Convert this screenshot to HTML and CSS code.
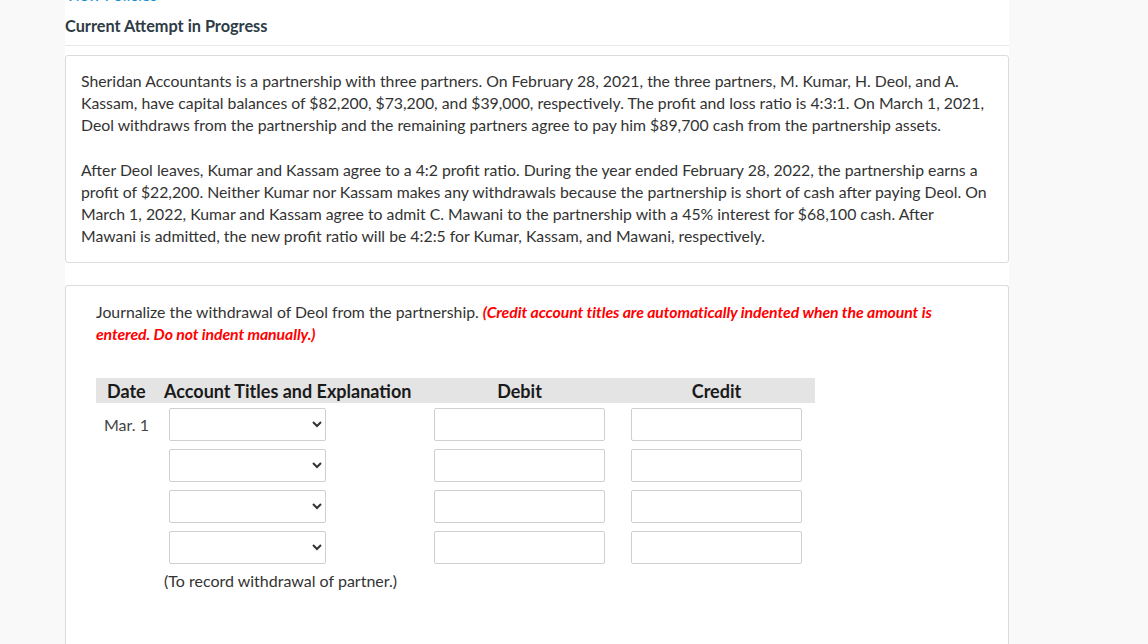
FILE: index.html
```html
<!DOCTYPE html>
<html>
<head>
<meta charset="utf-8">
<link rel="stylesheet" href="styles.css">
</head>
<body>
<div class="page">
  <div class="gutter"></div>
  <main class="main">
    <div class="policies-wrap"><a class="policies" href="#">View Policies</a></div>
    <h2 class="attempt">Current Attempt in Progress</h2>
    <section class="card problem">
      <p>Sheridan Accountants is a partnership with three partners. On February 28, 2021, the three partners, M. Kumar, H. Deol, and A. Kassam, have capital balances of $82,200, $73,200, and $39,000, respectively. The profit and loss ratio is 4:3:1. On March 1, 2021, Deol withdraws from the partnership and the remaining partners agree to pay him $89,700 cash from the partnership assets.</p>
      <p>After Deol leaves, Kumar and Kassam agree to a 4:2 profit ratio. During the year ended February 28, 2022, the partnership earns a profit of $22,200. Neither Kumar nor Kassam makes any withdrawals because the partnership is short of cash after paying Deol. On March 1, 2022, Kumar and Kassam agree to admit C. Mawani to the partnership with a 45% interest for $68,100 cash. After Mawani is admitted, the new profit ratio will be 4:2:5 for Kumar, Kassam, and Mawani, respectively.</p>
    </section>
    <section class="card question">
      <p class="prompt">Journalize the withdrawal of Deol from the partnership. <em class="note">(Credit account titles are automatically indented when the amount is entered. Do not indent manually.)</em></p>
      <div class="journal">
        <div class="jhead">
          <div class="h-date">Date</div>
          <div class="h-acct">Account Titles and Explanation</div>
          <div class="h-num">Debit</div>
          <div class="h-gap"></div>
          <div class="h-num">Credit</div>
        </div>
        <div class="jrow">
          <div class="c-date">Mar. 1</div>
          <div class="c-acct"><select class="sel"><option></option></select></div>
          <div class="c-num"><input class="inp" type="text"></div>
          <div class="c-gap"></div>
          <div class="c-num"><input class="inp" type="text"></div>
        </div>
        <div class="jrow">
          <div class="c-date"></div>
          <div class="c-acct"><select class="sel"><option></option></select></div>
          <div class="c-num"><input class="inp" type="text"></div>
          <div class="c-gap"></div>
          <div class="c-num"><input class="inp" type="text"></div>
        </div>
        <div class="jrow">
          <div class="c-date"></div>
          <div class="c-acct"><select class="sel"><option></option></select></div>
          <div class="c-num"><input class="inp" type="text"></div>
          <div class="c-gap"></div>
          <div class="c-num"><input class="inp" type="text"></div>
        </div>
        <div class="jrow">
          <div class="c-date"></div>
          <div class="c-acct"><select class="sel"><option></option></select></div>
          <div class="c-num"><input class="inp" type="text"></div>
          <div class="c-gap"></div>
          <div class="c-num"><input class="inp" type="text"></div>
        </div>
        <div class="explain">(To record withdrawal of partner.)</div>
      </div>
    </section>
  </main>
  <div class="side"></div>
</div>
</body>
</html>
```

FILE: styles.css
```css
html, body {
  margin: 0;
  padding: 0;
  background: #f9f9f9;
  height: 100%;
  overflow: hidden;
}
body {
  font-family: Lato, "Liberation Sans", sans-serif;
  color: #333;
}
.page {
  display: flex;
  height: 644px;
}
.gutter {
  width: 65px;
  flex: none;
  background: #f9f9f9;
}
.main {
  width: 944px;
  flex: none;
  background: #fff;
  display: flex;
  flex-direction: column;
}
.main > * {
  flex-shrink: 0;
}
.side {
  flex: 1;
  background: #f9f9f9;
}
.policies-wrap {
  height: 16px;
  overflow: hidden;
}
.policies {
  display: block;
  font-size: 16px;
  line-height: 18px;
  margin-top: -14px;
  color: #1a8fd8;
  text-decoration: none;
}
.attempt {
  margin: 0;
  font-size: 16.3px;
  font-weight: 700;
  color: #2d3b45;
  line-height: 20px;
  padding: 0 0 9px 0;
  border-bottom: 1px solid #e8e8e8;
}
.card {
  border: 1px solid #dcdcdc;
  border-radius: 3px;
  background: #fff;
}
.problem {
  margin-top: 9px;
  padding: 14px 16px 15px 15px;
  font-size: 15.8px;
  line-height: 22px;
}
.problem p {
  margin: 0;
}
.problem p + p {
  margin-top: 23px;
}
.question {
  margin-top: 22px;
  padding: 15px 30px 40px 30px;
  flex: 1 0 auto;
  border-bottom: none;
  border-radius: 3px 3px 0 0;
}
.prompt {
  margin: 0;
  font-size: 15.8px;
  line-height: 22px;
  color: #333;
  width: 860px;
}
.note {
  color: #ff0000;
  font-weight: 700;
  font-style: italic;
  letter-spacing: -0.08px;
}
.journal {
  margin-top: 33px;
  width: 719px;
}
.jhead {
  display: flex;
  background: #e4e4e4;
  height: 25px;
  align-items: center;
  font-weight: 700;
  font-size: 18px;
  color: #1a1a1a;
}
.h-date {
  width: 68px;
  padding-left: 11px;
  box-sizing: border-box;
}
.h-acct {
  width: 270px;
}
.h-num {
  width: 171px;
  text-align: center;
}
.h-gap, .c-gap {
  width: 26px;
}
.jrow {
  display: flex;
  align-items: center;
  margin-top: 5px;
  height: 32px;
}
.jrow + .jrow {
  margin-top: 9px;
}
.c-date {
  width: 68px;
  padding-left: 8px;
  box-sizing: border-box;
  font-size: 16px;
  color: #444;
}
.c-acct {
  width: 270px;
  padding-left: 5px;
  box-sizing: border-box;
}
.c-num {
  width: 171px;
}
.sel {
  width: 157px;
  height: 33px;
  box-sizing: border-box;
  border: 1px solid #cfcfcf;
  border-radius: 2px;
  background: #fff;
  font-family: Lato, sans-serif;
  font-size: 15px;
  color: #333;
}
.inp {
  width: 171px;
  height: 33px;
  box-sizing: border-box;
  border: 1px solid #cfcfcf;
  border-radius: 2px;
  background: #fff;
  margin: 0;
  padding: 0 6px;
  font-family: Lato, sans-serif;
  font-size: 15px;
}
.explain {
  margin-top: 7px;
  padding-left: 68px;
  font-size: 16px;
  line-height: 22px;
  color: #333;
}
```
